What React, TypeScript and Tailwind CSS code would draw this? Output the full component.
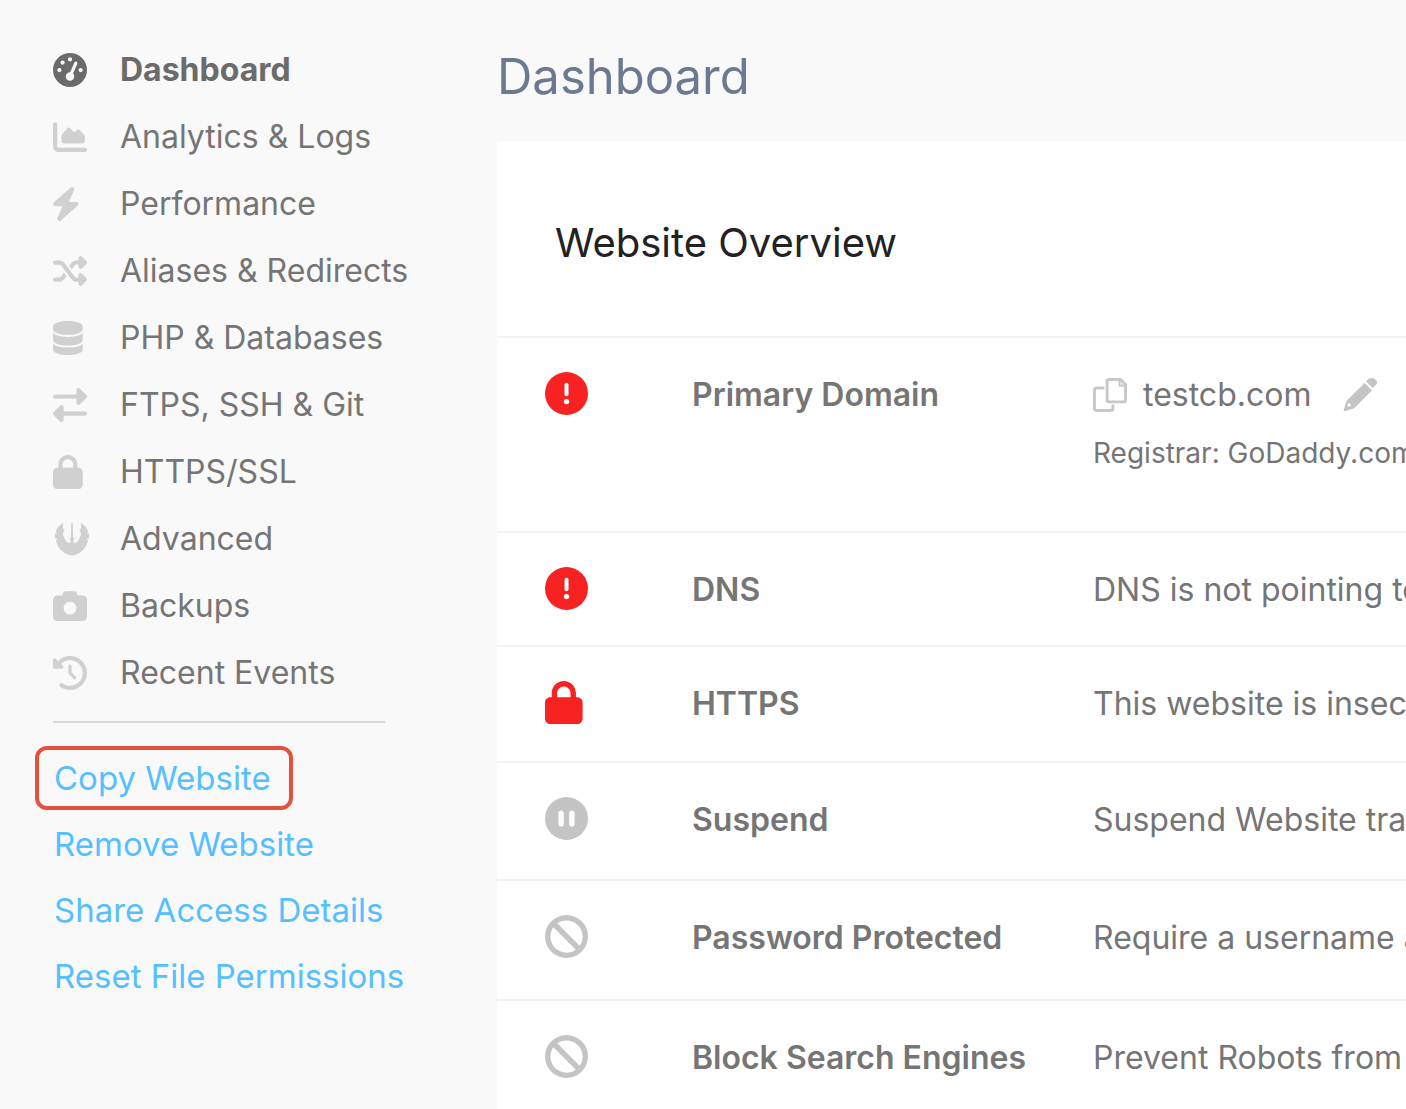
import React from "react";
import {
  FaBan,
  FaBolt,
  FaCamera,
  FaChartArea,
  FaCircleExclamation,
  FaCirclePause,
  FaClockRotateLeft,
  FaDatabase,
  FaGaugeHigh,
  FaLock,
  FaRightLeft,
  FaShuffle,
} from "react-icons/fa6";

type IconProps = React.SVGAttributes<SVGElement>;
type Icon = React.ComponentType<IconProps>;

interface MenuItem {
  label: string;
  icon: Icon;
  active?: boolean;
}

interface OverviewRow {
  label: string;
  icon: Icon;
  iconClass: string;
  rowClass: string;
  value: React.ReactNode;
}

const CopyIcon: React.FC<IconProps> = (props) => (
  <svg viewBox="0 0 512 512" fill="none" stroke="currentColor" strokeWidth="44" {...props}>
    <path d="M246 22h166l78 78v226c0 20-14 34-34 34H246c-20 0-34-14-34-34V56c0-20 14-34 34-34z" />
    <path d="M400 22v90h90" strokeWidth="30" />
    <path d="M172 150H56c-20 0-34 14-34 34v272c0 20 14 34 34 34h210c20 0 34-14 34-34v-56" />
  </svg>
);

const PencilIcon: React.FC<IconProps> = (props) => (
  <svg viewBox="0 0 512 512" fill="currentColor" {...props}>
    <path d="M421 8c19-12 43-10 58 6l20 20c18 18 18 48 0 66l-52 52-100-100 52-52z" />
    <path
      fillRule="evenodd"
      d="M326 74l112 112-262 262c-8 8-17 13-28 16L24 501c-9 3-17-5-14-14l37-124c3-11 8-20 16-28L326 74zM92 382a26 26 0 1 0 0 52 26 26 0 1 0 0-52z"
    />
  </svg>
);

const JediIcon: React.FC<IconProps> = (props) => (
  <svg viewBox="0 0 576 512" fill="currentColor" {...props}>
    <path d="M160 8c-18 50-12 92 18 128-32 22-40 50-12 86 10 52 40 88 90 102l14-48-26-22 28-12 4-226c1-12 23-12 24 0l4 226 28 12-26 22 14 48c50-14 80-50 90-102 28-36 20-64-12-86 30-36 36-78 18-128 62 34 104 84 118 142l-26 16 36 6c4 26 4 50 0 74l-40 10 28 22c-36 132-128 220-244 224C172 498 80 410 44 278l28-22-40-10c-4-24-4-48 0-74l36-6-26-16C56 92 98 42 160 8z" />
  </svg>
);

// the glyph has empty space on its left side
const BoltIcon: React.FC<IconProps> = (props) => <FaBolt viewBox="32 0 448 512" {...props} />;

const menuItems: MenuItem[] = [
  { label: "Dashboard", icon: FaGaugeHigh, active: true },
  { label: "Analytics & Logs", icon: FaChartArea },
  { label: "Performance", icon: BoltIcon },
  { label: "Aliases & Redirects", icon: FaShuffle },
  { label: "PHP & Databases", icon: FaDatabase },
  { label: "FTPS, SSH & Git", icon: FaRightLeft },
  { label: "HTTPS/SSL", icon: FaLock },
  { label: "Advanced", icon: JediIcon },
  { label: "Backups", icon: FaCamera },
  { label: "Recent Events", icon: FaClockRotateLeft },
];

const actions = [
  { label: "Copy Website", highlighted: true },
  { label: "Remove Website" },
  { label: "Share Access Details" },
  { label: "Reset File Permissions" },
];

const PrimaryDomain: React.FC = () => (
  <div>
    <div className="flex items-center">
      <button type="button" aria-label="Copy domain" className="mr-4 text-[#c8c8c8]">
        <CopyIcon className="h-[34px] w-[34px]" />
      </button>
      <span>testcb.com</span>
      <button type="button" aria-label="Edit domain" className="ml-8 text-[#c4c4c4]">
        <PencilIcon className="h-[34px] w-[34px]" />
      </button>
    </div>
    <p className="mt-2 text-[28px]">Registrar: GoDaddy.com</p>
  </div>
);

const rows: OverviewRow[] = [
  {
    label: "Primary Domain",
    icon: FaCircleExclamation,
    iconClass: "text-[#f82222]",
    rowClass: "h-[195px]",
    value: <PrimaryDomain />,
  },
  {
    label: "DNS",
    icon: FaCircleExclamation,
    iconClass: "text-[#f82222]",
    rowClass: "h-[114px]",
    value: "DNS is not pointing to",
  },
  {
    label: "HTTPS",
    icon: FaLock,
    iconClass: "text-[#f82222]",
    rowClass: "h-[116px]",
    value: "This website is insecure",
  },
  {
    label: "Suspend",
    icon: FaCirclePause,
    iconClass: "text-[#c4c4c4]",
    rowClass: "h-[118px]",
    value: "Suspend Website traffic",
  },
  {
    label: "Password Protected",
    icon: FaBan,
    iconClass: "text-[#c4c4c4]",
    rowClass: "h-[120px]",
    value: "Require a username and",
  },
  {
    label: "Block Search Engines",
    icon: FaBan,
    iconClass: "text-[#c4c4c4]",
    rowClass: "",
    value: "Prevent Robots from",
  },
];

const Sidebar: React.FC = () => {
  return (
    <aside className="w-[497px] shrink-0 pl-[35px] pt-9">
      <nav className="pl-[18px]">
        <ul>
          {menuItems.map(({ label, icon: Icon, active }) => (
            <li key={label}>
              <a
                href="#"
                className={
                  active
                    ? "flex h-[67px] items-center font-bold text-[#6b6b6b]"
                    : "flex h-[67px] items-center text-[#757575]"
                }
              >
                <span className={active ? "w-[67px]" : "w-[67px] text-[#d0d0d0]"}>
                  <Icon
                    preserveAspectRatio="xMinYMid"
                    className={label === "Advanced" ? "h-[34px] w-[38px]" : "h-[34px] w-[34px]"}
                  />
                </span>
                {label}
              </a>
            </li>
          ))}
        </ul>
      </nav>
      <hr className="ml-[18px] mt-[15px] w-[332px] border-t-2 border-[#d9d9d9]" />
      <ul className="mt-[23px] flex flex-col items-start gap-[2px] text-[33px]">
        {actions.map(({ label, highlighted }) => (
          <li key={label}>
            <a
              href="#"
              className={
                highlighted
                  ? "flex h-16 items-center rounded-xl border-4 border-[#e5503c] pl-[15px] pr-[18px] text-[#55bfff]"
                  : "flex h-16 items-center rounded-xl border-4 border-transparent pl-[15px] pr-[18px] text-[#55bfff]"
              }
            >
              {label}
            </a>
          </li>
        ))}
      </ul>
    </aside>
  );
};

const App: React.FC = () => {
  return (
    <div className="flex min-h-screen overflow-hidden whitespace-nowrap bg-[#f9f9f9] font-['Inter',sans-serif] text-[32px] leading-[50px] text-[#757575]">
      <Sidebar />
      <main className="flex min-w-0 flex-1 flex-col overflow-hidden">
        <h1 className="flex h-[141px] items-center pt-3 text-[49px] text-[#6b7a90]">Dashboard</h1>
        <section className="flex-1 bg-white">
          <h2 className="flex h-[195px] items-center px-[58px] pt-2 text-[40px] text-[#222222]">Website Overview</h2>
          <table className="w-full table-fixed border-collapse text-left">
            <tbody>
              {rows.map(({ label, icon: Icon, iconClass, rowClass, value }) => (
                <tr key={label} className={`border-t-2 border-[#f2f2f2] align-top ${rowClass}`}>
                  <td className="w-[195px] pl-12 pt-[34px]">
                    <Icon preserveAspectRatio="xMinYMid" className={`h-[43px] w-[43px] ${iconClass}`} />
                  </td>
                  <th scope="row" className="w-[401px] pt-8 font-semibold text-[#757575]">
                    {label}
                  </th>
                  <td className="pt-8">{value}</td>
                </tr>
              ))}
            </tbody>
          </table>
        </section>
      </main>
    </div>
  );
};

export default App;
